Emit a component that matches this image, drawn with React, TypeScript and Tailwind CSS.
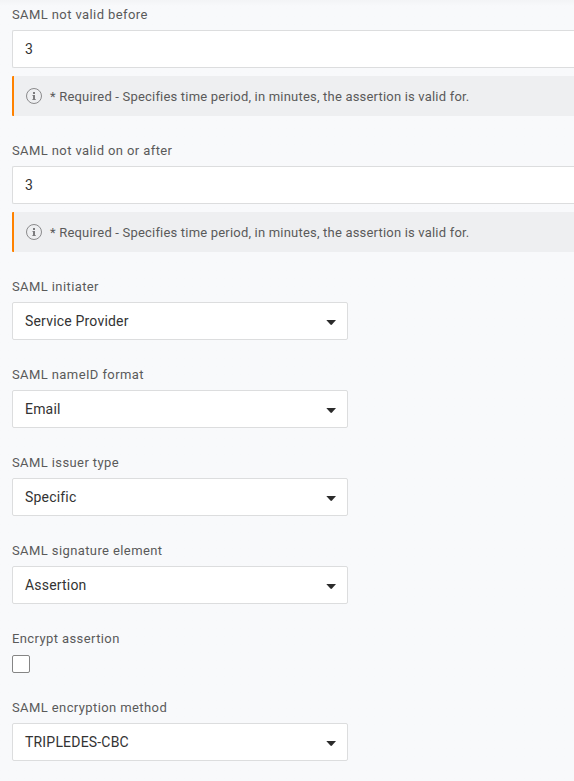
import React from "react";

function Label({ children }: { children: React.ReactNode }) {
  return <div className="h-4 text-[13px] leading-[18px] tracking-[0.4px] text-[#5a5a5a]">{children}</div>;
}

function NumberField({ label, value }: { label: string; value: string }) {
  return (
    <div className="mb-[26px]">
      <Label>{label}</Label>
      <div className="mt-2 flex h-[38px] items-center rounded-l-[2px] border border-r-0 border-[#dcddde] bg-white px-3 text-sm text-[#333]">
        {value}
      </div>
      <div className="mt-2 flex h-10 items-center rounded-l-[1px] border-l-2 border-[#ff8200] bg-[#eeeff1] pl-3 text-[13px] tracking-[0.195px] text-[#5a5a5a]">
        <svg className="mr-2 size-4 shrink-0" viewBox="0 0 16 16" fill="none" stroke="#8a8a8c">
          <circle cx="8" cy="8" r="7.5" />
          <path d="M7 4H9V6H7ZM6.5 7H9V11H9.7V12H6.4V11H7V8H6.5Z" fill="#7c7c7e" stroke="none" />
        </svg>
        <span className="pt-0.5 leading-5">* Required - Specifies time period, in minutes, the assertion is valid for.</span>
      </div>
    </div>
  );
}

function SelectField({ label, value }: { label: string; value: string }) {
  return (
    <div className="mb-[26px]">
      <Label>{label}</Label>
      <div className="mt-2 flex h-[38px] w-[336px] items-center justify-between rounded-[2px] border border-[#dcddde] bg-white pr-[11px] pl-3 text-sm tracking-[0.19px] text-[#333]">
        <span>{value}</span>
        <svg className="mt-0.5 h-[5px] w-[10px]" viewBox="0 0 10 5" fill="#2b2b2b">
          <path d="M0.3 0H10L6 4.6Q5.2 5.4 4.4 4.6Z" />
        </svg>
      </div>
    </div>
  );
}

export default function App() {
  return (
    <main className="h-[781px] overflow-hidden bg-[#f8f9fb] bg-linear-to-b from-[#f3f4f6] to-[#f8f9fb] to-[6px] pt-[6px] pl-3 font-['Roboto',sans-serif]">
      <NumberField label="SAML not valid before" value="3" />
      <NumberField label="SAML not valid on or after" value="3" />
      <SelectField label="SAML initiater" value="Service Provider" />
      <SelectField label="SAML nameID format" value="Email" />
      <SelectField label="SAML issuer type" value="Specific" />
      <SelectField label="SAML signature element" value="Assertion" />
      <div className="mb-[26px]">
        <Label>Encrypt assertion</Label>
        <div className="mt-[9px] size-[18px] rounded-[2px] border border-[#858585] bg-white" />
      </div>
      <SelectField label="SAML encryption method" value="TRIPLEDES-CBC" />
    </main>
  );
}
